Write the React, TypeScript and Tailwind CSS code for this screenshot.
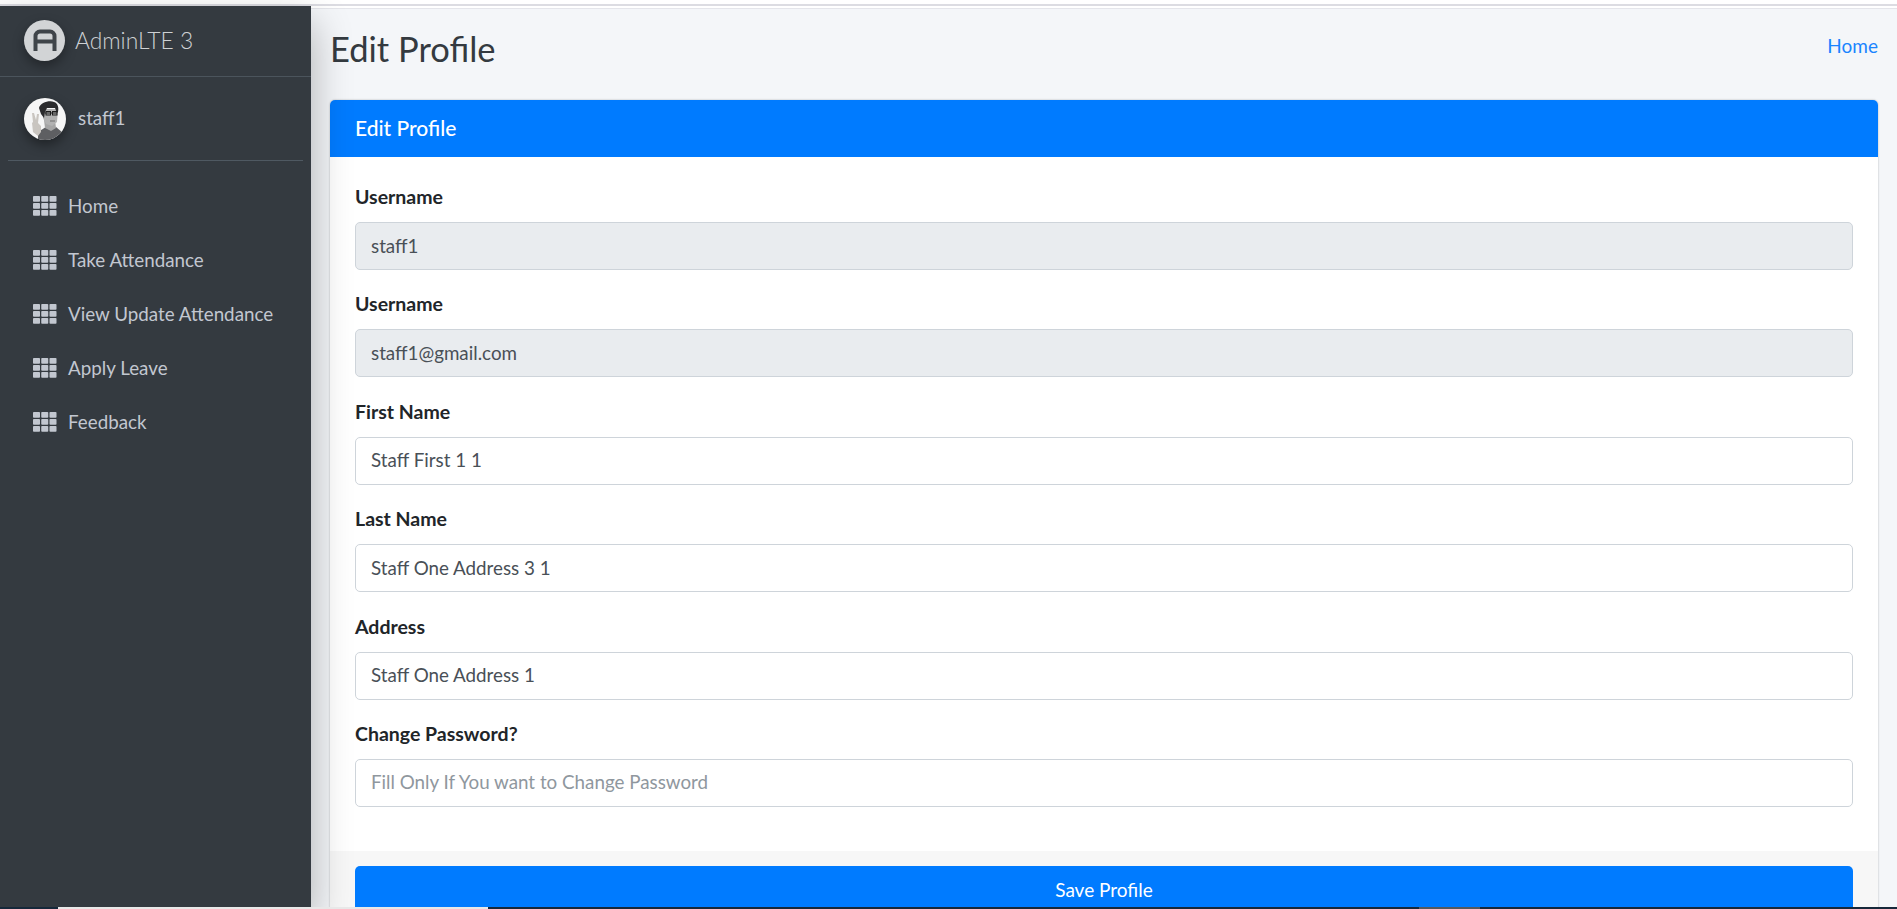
const NAV = ["Home", "Take Attendance", "View Update Attendance", "Apply Leave", "Feedback"];

const FIELDS: Array<{ label: string; value?: string; placeholder?: string; disabled?: boolean }> = [
  { label: "Username", value: "staff1", disabled: true },
  { label: "Username", value: "staff1@gmail.com", disabled: true },
  { label: "First Name", value: "Staff First 1 1" },
  { label: "Last Name", value: "Staff One Address 3 1" },
  { label: "Address", value: "Staff One Address 1" },
  { label: "Change Password?", placeholder: "Fill Only If You want to Change Password" },
];

function GridIcon() {
  return (
    <svg width="24" height="20" viewBox="0 0 24 20" fill="#c2c7d0" className="shrink-0">
      {[0, 7, 14].map((y) =>
        [0, 8.25, 16.5].map((x) => <rect key={`${x}-${y}`} x={x} y={y} width="7" height="5.8" rx="0.8" />),
      )}
    </svg>
  );
}

function Logo() {
  return (
    <div className="flex h-[41px] w-[41px] items-center justify-center rounded-full bg-[#d2d4d6] shadow-[0_5px_12px_rgba(0,0,0,0.35)]">
      <svg width="24" height="22" viewBox="0 0 24 22" fill="none" stroke="#3f4449" strokeWidth="4">
        <path d="M2.5 22V7a4.5 4.5 0 0 1 4.5-4.5h10a4.5 4.5 0 0 1 4.5 4.5v15M2.5 12.5h19" />
      </svg>
    </div>
  );
}

function Avatar() {
  return (
    <svg width="42" height="42" viewBox="0 0 42 42" className="shrink-0 rounded-full shadow-[0_5px_12px_rgba(0,0,0,0.4)]">
      <rect width="42" height="42" fill="#f6f6f6" />
      <path d="M14 42v-8l8-5h10l7 6v7z" fill="#5e5f62" />
      <path d="M20 22h11l1 8-5 3-6-3z" fill="#a5a5a5" />
      <path d="M19 11h15l-1 13-5 4-6-2-3-6z" fill="#b2b2b2" />
      <path d="M15 10c1-5 10-8 15-6 4 1 5 6 4 10l-1 1-2-5-8 0-2 4-1 6-3-4z" fill="#2b2b2d" />
      <path d="M21 15h12" stroke="#1d1d1d" strokeWidth="1.2" />
      <rect x="22" y="13.5" width="4.5" height="3.5" fill="none" stroke="#1d1d1d" strokeWidth="1" />
      <rect x="28.5" y="13.5" width="4.5" height="3.5" fill="none" stroke="#1d1d1d" strokeWidth="1" />
      <path d="M26 23h5" stroke="#6f6f6f" strokeWidth="1.2" />
      <path d="M9 34l-1-9 1-1-1-9 2 0 2 7 1-6 2 0-1 9 3 3 0 6-3 4z" fill="#c9c5c0" />
    </svg>
  );
}

export default function App() {
  return (
    <div className="flex h-[909px] w-full flex-col overflow-hidden bg-white font-['Lato','Noto_Sans',sans-serif] text-[18.8px]">
      <div className="h-[4px] shrink-0 bg-white" />
      <div className="h-[2px] shrink-0 bg-[#dcdce2]" />
      <div className="flex min-h-0 flex-1">
        <aside className="relative z-10 flex w-[311px] shrink-0 flex-col bg-[#343a40] shadow-[0_16px_38px_rgba(0,0,0,0.3)]">
          <div className="flex h-[71px] items-center gap-[10px] border-b border-[#4b545c] pb-[2px] pl-[24px]">
            <Logo />
            <span className="text-[22.8px] font-light text-[#ced1d4]">AdminLTE 3</span>
          </div>
          <div className="mx-[8px] flex h-[84px] items-center gap-[12px] border-b border-[#4f5962] pl-[16px]">
            <Avatar />
            <span className="text-[#c2c7d0]">staff1</span>
          </div>
          <nav className="flex flex-col pt-[18px] pl-[33px]">
            {NAV.map((item) => (
              <div key={item} className="flex h-[54px] items-center gap-[11px] text-[#c2c7d0]">
                <GridIcon />
                <span>{item}</span>
              </div>
            ))}
          </nav>
        </aside>

        <main className="min-w-0 flex-1 bg-white pt-[2px]">
          <div className="h-full border-t border-[#e4e5ea] bg-[#f4f6f9]">
            <div className="flex h-[91px] items-start justify-between pr-[19px] pl-[19px]">
              <h1 className="pt-[15px] text-[34.5px] leading-[50px] font-normal text-[#343a40]">Edit Profile</h1>
              <a className="pt-[23px] text-[19px] text-[#1a84ff]">Home</a>
            </div>
            <section className="mr-[19px] ml-[19px] rounded-[5px] bg-white shadow-[0_0_2px_rgba(0,0,0,0.3)]">
              <div className="flex h-[57px] items-center rounded-t-[5px] bg-[#007bff] px-[25px] pb-[2px] text-[21px] font-medium text-white">
                Edit Profile
              </div>
              <div className="flex flex-col gap-[19.4px] px-[25px] pt-[25px] pb-[44px]">
                {FIELDS.map((field, index) => (
                  <div key={index}>
                    <label className="mb-[10px] block text-[19.5px] leading-[30px] font-bold text-[#212529]">{field.label}</label>
                    <input
                      readOnly
                      value={field.value}
                      placeholder={field.placeholder}
                      className={
                        field.disabled
                          ? "block h-[48px] w-full rounded-[5px] border border-[#ced4da] bg-[#e9ecef] px-[15px] pb-[2px] text-[#495057] outline-none"
                          : "block h-[48px] w-full rounded-[5px] border border-[#ced4da] bg-white px-[15px] pb-[2px] text-[#495057] outline-none placeholder:text-[#8f979e]"
                      }
                    />
                  </div>
                ))}
              </div>
              <div className="bg-[#f7f7f7] px-[25px] pt-[15px]">
                <button className="block h-[48px] w-full rounded-[5px] bg-[#007bff] text-[19px] text-white">Save Profile</button>
              </div>
            </section>
          </div>
        </main>
      </div>
      <div className="relative z-20 flex h-[2px] shrink-0 bg-[#16283a]">
        <div className="ml-[58px] w-[430px] bg-[#e8e8e8]" />
        <div className="ml-[931px] w-[61px] bg-[#55595e]" />
      </div>
    </div>
  );
}
